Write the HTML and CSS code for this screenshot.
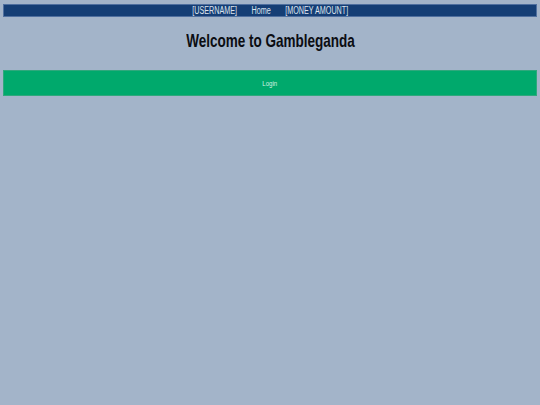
FILE: index.html
```html
<!DOCTYPE html>
<html>
<head>
<meta charset="utf-8">
<link rel="stylesheet" href="styles.css">
</head>
<body>
<nav class="topnav">
  <div class="nav-items">
    <span class="nav-item">[USERNAME]</span>
    <span class="nav-item">Home</span>
    <span class="nav-item">[MONEY AMOUNT]</span>
  </div>
</nav>
<div class="title-wrap"><h1 class="title">Welcome to Gambleganda</h1></div>
<div class="login-bar"><span class="login-text">Login</span></div>
</body>
</html>
```
FILE: styles.css
```css
html, body {
  margin: 0;
  padding: 0;
  background: #a3b4c9;
}
body {
  padding: 4px 3px;
  font-family: "Liberation Sans", Arial, sans-serif;
}
.topnav {
  height: 11px;
  background: #153e75;
  border: 1px solid #4f6f9f;
  display: flex;
  justify-content: center;
  align-items: center;
  font-size: 10px;
  color: #dde4ee;
}
.nav-items {
  display: flex;
  gap: 20px;
  transform: scaleX(0.72);
  line-height: 11px;
}
.title-wrap {
  display: flex;
  justify-content: center;
  margin-top: 11px;
}
.title {
  margin: 0;
  display: inline-block;
  transform: scaleX(0.73);
  font-size: 18.5px;
  line-height: 25px;
  font-weight: bold;
  color: #0b0d12;
}
.login-bar {
  margin-top: 17px;
  height: 24px;
  background: #00a96c;
  border: 1px solid #2fa87c;
  display: flex;
  justify-content: center;
  align-items: center;
  font-size: 8px;
  color: #d4f0e2;
}
.login-text {
  display: inline-block;
  transform: scaleX(0.76);
}
```
